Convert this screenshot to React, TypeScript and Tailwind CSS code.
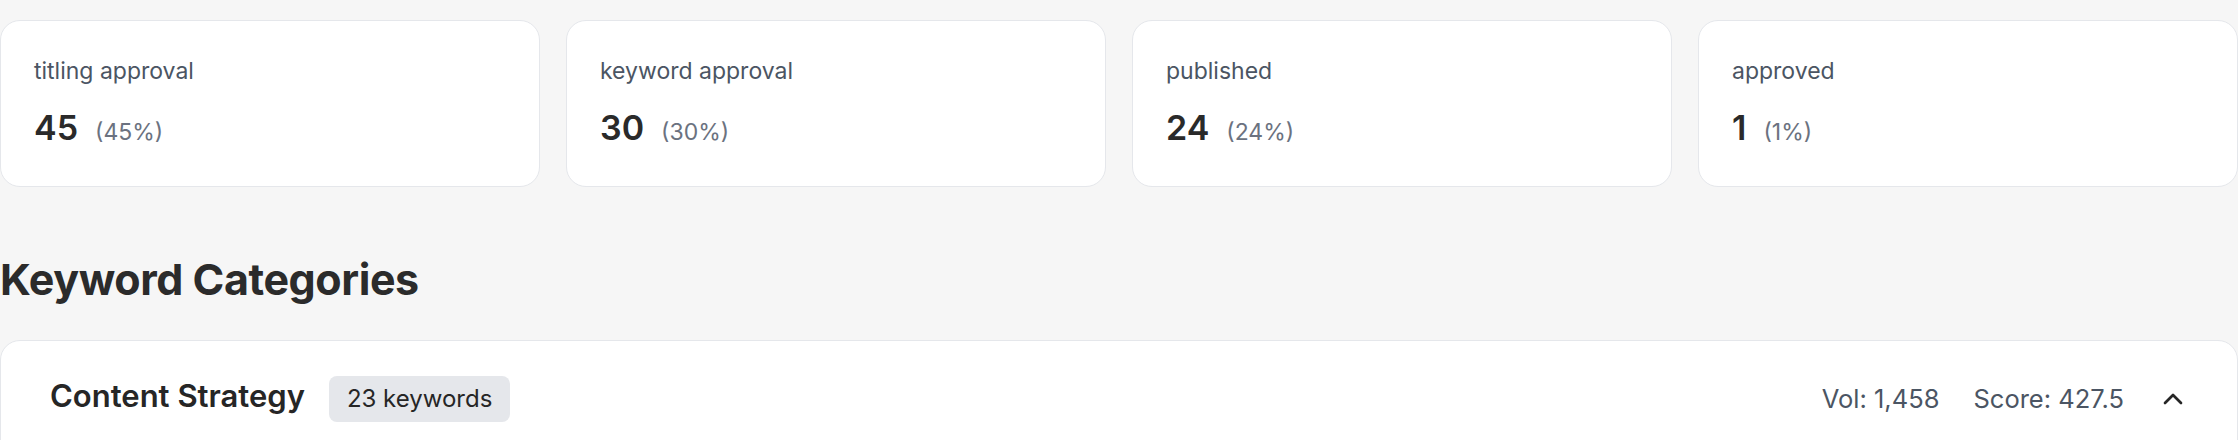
import React from "react";
import { ChevronUp } from "lucide-react";

interface Stat {
  label: string;
  count: number;
  pct: number;
}

const stats: Stat[] = [
  { label: "titling approval", count: 45, pct: 45 },
  { label: "keyword approval", count: 30, pct: 30 },
  { label: "published", count: 24, pct: 24 },
  { label: "approved", count: 1, pct: 1 },
];

const StatCard: React.FC<Stat> = ({ label, count, pct }) => (
  <div className="h-[167px] rounded-[20px] border border-[#e5e7eb] bg-white px-[33px] pt-[35px]">
    <p className="text-[23px] leading-[30px] text-[#4b5563]">{label}</p>
    <div className="mt-[20px] flex items-baseline gap-[17px]">
      <span className="text-[34px] font-semibold leading-[44px] text-[#2a2a2a]">{count}</span>
      <span className="text-[23px] leading-[30px] text-[#6b7280]">({pct}%)</span>
    </div>
  </div>
);

export default function App() {
  return (
    <div className="min-h-screen bg-[#f6f6f6] pt-[20px] font-['Inter',sans-serif]">
      <div className="grid grid-cols-4 gap-[26px]">
        {stats.map((s) => (
          <StatCard key={s.label} {...s} />
        ))}
      </div>

      <h2 className="mt-[66px] text-[43px] font-bold leading-[52px] tracking-[-0.01em] text-[#2b2b2b]">
        Keyword Categories
      </h2>

      <div className="mt-[35px] rounded-t-[20px] border border-[#e5e7eb] bg-white pl-[49px] pr-[48px] pt-[35px] pb-[35px]">
        <div className="flex items-center">
          <span className="mb-[6px] text-[31px] font-semibold leading-[38px] text-[#262626]">Content Strategy</span>
          <span className="ml-[24px] flex h-[46px] items-center rounded-[8px] bg-[#e5e7eb] px-[18px] text-[24px] text-[#262626]">
            23 keywords
          </span>
          <div className="ml-auto flex items-center gap-[34px] text-[25.5px] text-[#4b5563]">
            <span>Vol: 1,458</span>
            <span>Score: 427.5</span>
          </div>
          <button className="ml-[33px] text-[#262626]">
            <ChevronUp size={32} strokeWidth={2} />
          </button>
        </div>
      </div>
    </div>
  );
}
